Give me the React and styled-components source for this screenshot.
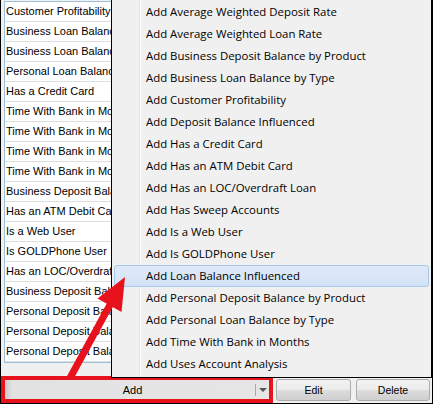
import styled, { createGlobalStyle } from "styled-components";

const GlobalStyle = createGlobalStyle`
  html, body {
    margin: 0;
    padding: 0;
    background: #ffffff;
    overflow: hidden;
  }
`;

const Frame = styled.div`
  position: relative;
  width: 433px;
  height: 404px;
  box-sizing: border-box;
  border: 1px solid #000;
  border-top: none;
  background: #f0f0f0;
  display: flex;
  flex-direction: column;
  overflow: hidden;
`;

const ListArea = styled.div`
  height: 376px;
  padding: 1px 0 0 3px;
  box-sizing: border-box;
`;

const List = styled.div`
  width: 130px;
  border: 1px solid #9fc0da;
  background: #fff;
  overflow: hidden;
`;

const Row = styled.div`
  height: 19px;
  line-height: 19px;
  border-bottom: 1px solid #dedede;
  padding-left: 1px;
  font-family: "Liberation Sans", Arial, sans-serif;
  font-size: 11px;
  color: #000;
  white-space: nowrap;
  overflow: hidden;
`;

const BottomBar = styled.div`
  height: 27px;
  display: flex;
  align-items: center;
`;

const RedBox = styled.div`
  width: 272px;
  height: 27px;
  box-sizing: border-box;
  border: 4px solid #e8121c;
  display: flex;
`;

const AddButton = styled.div`
  flex: 1;
  display: flex;
  align-items: center;
  background: linear-gradient(to right, #c9c9c9 0, #e2e2e2 7px, #e6e6e6 100%);
  font-family: "Liberation Sans", Arial, sans-serif;
  font-size: 11px;
  color: #000;
`;

const AddLabel = styled.span`
  flex: 1;
  text-align: center;
  padding-left: 6px;
`;

const DropPart = styled.div`
  width: 13px;
  height: 12px;
  display: flex;
  align-items: center;
  justify-content: center;
  border-left: 1px solid #a9a9a9;
  box-sizing: border-box;
  margin: 0 1px;
`;

const Caret = styled.div`
  width: 0;
  height: 0;
  border-left: 4px solid transparent;
  border-right: 4px solid transparent;
  border-top: 4px solid #555;
  margin-left: 1px;
`;

const Button = styled.div`
  width: ${(p) => p.$w}px;
  height: 22px;
  margin-left: ${(p) => p.$gap}px;
  box-sizing: border-box;
  border: 1px solid #acacac;
  border-radius: 3px;
  background: linear-gradient(#f2f2f2, #ebebeb 50%, #dddddd 50%, #cfcfcf);
  display: flex;
  align-items: center;
  justify-content: center;
  font-family: "Liberation Sans", Arial, sans-serif;
  font-size: 10.5px;
  color: #000;
`;

const Menu = styled.div`
  position: absolute;
  left: 110px;
  top: -2px;
  width: 321px;
  box-sizing: border-box;
  border: 1px solid #000;
  padding: 2px;
  background: linear-gradient(
    to right,
    #f0f0f0 27px,
    #e2e3e3 27px,
    #e2e3e3 28px,
    #ffffff 28px,
    #ffffff 29px,
    #f0f0f0 29px
  );
  z-index: 2;
`;

const Item = styled.div`
  height: 22px;
  line-height: 19px;
  padding-left: 31px;
  box-sizing: border-box;
  border: 1px solid ${(p) => (p.$active ? "#a8c8ee" : "transparent")};
  border-radius: 3px;
  background: ${(p) =>
    p.$active ? "linear-gradient(#dfeaf7, #d3e3f5)" : "transparent"};
  font-family: "Open Sans", "Segoe UI", sans-serif;
  font-size: 11.4px;
  color: #000;
  white-space: nowrap;
`;

const Overlay = styled.svg`
  position: absolute;
  left: -1px;
  top: 0;
  width: 433px;
  height: 404px;
  pointer-events: none;
  z-index: 3;
`;

const rows = [
  "Customer Profitability",
  "Business Loan Balance by Type",
  "Business Loan Balance by Type",
  "Personal Loan Balance by Type",
  "Has a Credit Card",
  "Time With Bank in Months",
  "Time With Bank in Months",
  "Time With Bank in Months",
  "Time With Bank in Months",
  "Business Deposit Balance by Product",
  "Has an ATM Debit Card",
  "Is a Web User",
  "Is GOLDPhone User",
  "Has an LOC/Overdraft Loan",
  "Business Deposit Balance by Product",
  "Personal Deposit Balance by Product",
  "Personal Deposit Balance by Product",
  "Personal Deposit Balance by Product",
];

const menuItems = [
  "Add Average Weighted Deposit Rate",
  "Add Average Weighted Loan Rate",
  "Add Business Deposit Balance by Product",
  "Add Business Loan Balance by Type",
  "Add Customer Profitability",
  "Add Deposit Balance Influenced",
  "Add Has a Credit Card",
  "Add Has an ATM Debit Card",
  "Add Has an LOC/Overdraft Loan",
  "Add Has Sweep Accounts",
  "Add Is a Web User",
  "Add Is GOLDPhone User",
  "Add Loan Balance Influenced",
  "Add Personal Deposit Balance by Product",
  "Add Personal Loan Balance by Type",
  "Add Time With Bank in Months",
  "Add Uses Account Analysis",
];

const App = () => {
  return (
    <>
      <GlobalStyle />
      <Frame>
        <ListArea>
          <List>
            {rows.map((r, i) => (
              <Row key={"row" + i}>{r}</Row>
            ))}
          </List>
        </ListArea>
        <BottomBar>
          <RedBox>
            <AddButton>
              <AddLabel>Add</AddLabel>
              <DropPart>
                <Caret />
              </DropPart>
            </AddButton>
          </RedBox>
          <Button $w={75} $gap={3}>
            Edit
          </Button>
          <Button $w={74} $gap={5}>
            Delete
          </Button>
        </BottomBar>

        <Menu>
          {menuItems.map((m, i) => (
            <Item key={"item" + i} $active={i === 12}>
              {m}
            </Item>
          ))}
        </Menu>

        {/* red callout arrow */}
        <Overlay viewBox="0 0 433 404">
          <line
            x1="70"
            y1="378"
            x2="111"
            y2="303"
            stroke="#e8121c"
            strokeWidth="7"
          />
          <polygon points="125,277 97.5,298.5 121.5,312" fill="#e8121c" />
        </Overlay>
      </Frame>
    </>
  );
};

export default App;
